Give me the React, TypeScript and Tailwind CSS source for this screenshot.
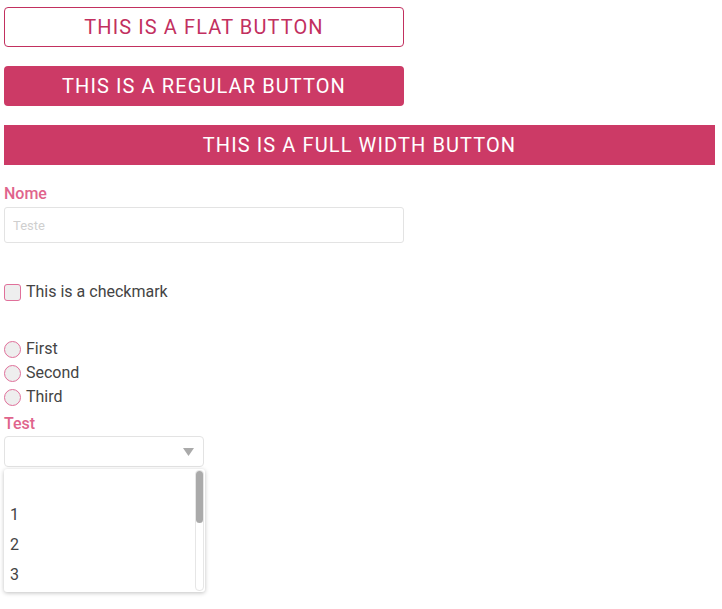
import React, { useState } from "react";

const App = () => {
  const [choice, setChoice] = useState("");
  const options = ["", "1", "2", "3"];
  return (
    <div className="min-h-screen w-full bg-white pl-[4px] pt-[7px] font-['Roboto',sans-serif] text-[16px] text-[#444]">
      <button className="flex h-[40px] w-[400px] items-center justify-center rounded-[4px] border border-[#c2305f] bg-white text-[20px] tracking-[1.1px] text-[#c2305f]">
        THIS IS A FLAT BUTTON
      </button>
      <button className="mt-[19px] flex h-[40px] w-[400px] items-center justify-center rounded-[4px] bg-[#cc3a66] text-[20px] tracking-[1.1px] text-white">
        THIS IS A REGULAR BUTTON
      </button>
      <button className="mt-[19px] flex h-[40px] w-[711px] items-center justify-center bg-[#cc3a66] text-[20px] tracking-[1.1px] text-white">
        THIS IS A FULL WIDTH BUTTON
      </button>

      <label className="mt-[19px] block h-[20px] leading-[20px] font-medium text-[#e0648c]">Nome</label>
      <input
        placeholder="Teste"
        className="mt-[3px] block h-[36px] w-[400px] rounded-[3px] border border-[#e3e3e3] bg-white px-[8px] text-[13px] placeholder:text-[#cfcfcf] focus:outline-none"
      />

      <label className="mt-[37px] flex h-[24px] items-center gap-[5px]">
        <span className="h-[17px] w-[17px] rounded-[3px] border border-[#e0709a] bg-[#eeeeee]" />
        <span>This is a checkmark</span>
      </label>

      <div className="mt-[33px] flex flex-col">
        {["First", "Second", "Third"].map((r) => (
          <label key={r} className="flex h-[24px] items-center gap-[5px]">
            <span className="h-[17px] w-[17px] rounded-full border border-[#e0709a] bg-[#eeeeee]" />
            <span>{r}</span>
          </label>
        ))}
      </div>

      <label className="mt-[5px] block h-[20px] leading-[20px] font-medium text-[#e0648c]">Test</label>
      <div className="mt-[2px] flex h-[31px] w-[200px] items-center justify-end rounded-[4px] border border-[#e3e3e3] bg-white pr-[9px]">
        <svg width="11" height="8" viewBox="0 0 11 8">
          <polygon points="0,0 11,0 5.5,8" fill="#aaaaaa" />
        </svg>
      </div>
      <div className="mt-[2px] flex h-[123px] w-[201px] rounded-[3px] bg-white shadow-[0_1px_4px_rgba(0,0,0,0.25)]">
        <ul className="flex-1 pt-[1px]">
          {options.map((o) => (
            <li
              key={o || "empty"}
              onClick={() => setChoice(o)}
              className={`flex h-[30px] items-center pl-[6px] text-[16px] ${choice === o && o ? "bg-[#f3f3f3]" : ""}`}
            >
              {o}
            </li>
          ))}
        </ul>
        <div className="my-[1px] mr-[1px] flex w-[9px] flex-col rounded-[4px] border border-[#e6e6e6]">
          <div className="h-[52px] rounded-[4px] bg-[#aaaaaa]" />
        </div>
      </div>
    </div>
  );
};

export default App;
